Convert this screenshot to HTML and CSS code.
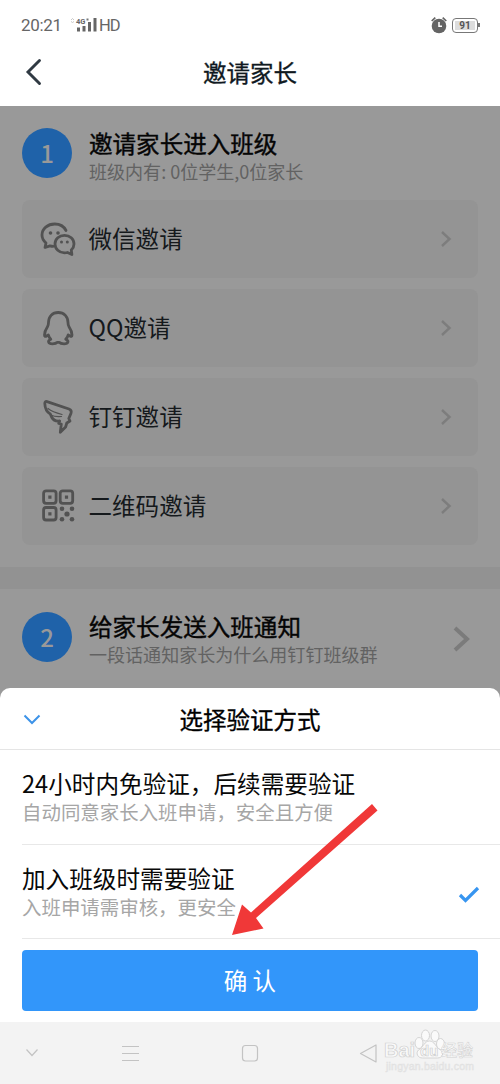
FILE: index.html
```html
<!DOCTYPE html>
<html lang="zh-CN">
<head>
<meta charset="utf-8">
<title>邀请家长</title>
<link rel="stylesheet" href="styles.css">
</head>
<body>
<div class="phone">
  <div class="status">
    <span class="time">20:21</span>
    <svg class="signal" width="28" height="16" viewBox="0 0 28 16">
      <path d="M1 3l1.500-1.500L4 3M1 4.500l1.500 1 1.500-1" fill="none" stroke="#bbb" stroke-width=".8"/>
      <text x="6" y="7" class="net">4G</text>
      <path d="M7 10.500h3v4H7zM12.500 9h3v5.500h-3zM18 5h3v9.500h-3zM23.500 1h3v13.500h-3z" fill="#666"/>
      <path d="M16.500 1.500h2v2h-2z" fill="#777"/>
    </svg>
    <span class="hd">HD</span>
    <svg class="alarm" width="18" height="18" viewBox="0 0 18 18">
      <circle cx="9" cy="10" r="7.300" fill="#646464"/>
      <path d="M1.700 5L5.300 1.600M16.300 5l-3.600-3.400" stroke="#646464" stroke-width="1.700"/>
      <path d="M9 6v4.300h3" stroke="#fff" stroke-width="1.500" fill="none"/>
    </svg>
    <span class="battery"><span class="charge">91</span></span>
  </div>
  <header class="header">
    <svg class="back" width="18" height="28" viewBox="0 0 18 28"><path d="M15.500 2.500L4 14l11.500 11.500" fill="none" stroke="#303a43" stroke-width="2.900" stroke-linecap="round"/></svg>
    <h1>邀请家长</h1>
  </header>
  <main class="content">
    <section class="step step-one">
      <span class="badge">1</span>
      <div class="copy"><h2>邀请家长进入班级</h2><p>班级内有: 0位学生,0位家长</p></div>
    </section>
    <div class="list">
      <div class="card">
        <svg class="icon" viewBox="0 0 36 36" width="36" height="36">
          <path d="M26 9.500C23.800 5.200 19.800 3 14.800 3 7.700 3 2 7.700 2 14c0 3.500 1.700 6 4 8l-1 4.500 5-1.700c1 .3 2 .5 3.200.5" />
          <path d="M24.500 14.300c5.300 0 9.500 3.800 9.500 8.700 0 2.600-1.200 4.600-2.700 6.100l.6 4.400-4.400-2c-1 .3-2 .4-3 .4-5.300 0-9.500-3.900-9.500-8.900s4.200-8.700 9.500-8.700z"/>
          <g class="solid"><circle cx="10.500" cy="12" r="1.800"/><circle cx="18" cy="12" r="1.800"/><circle cx="21.500" cy="21" r="1.500"/><circle cx="27.300" cy="21" r="1.500"/></g>
        </svg>
        <span class="label">微信邀请</span>
        <svg class="arrow" width="12" height="18" viewBox="0 0 12 18"><path d="M2 2l7.500 7L2 16"/></svg>
      </div>
      <div class="card">
        <svg class="icon" viewBox="0 0 36 36" width="36" height="36">
          <path d="M18.200 2.500C12.500 2.500 8.700 6.400 8.500 12.500c0 1.700-.2 3-1 4.200C5.600 19.500 4.500 22 4.500 25c0 1.500 1 1.800 2 .9l1.800-1c.4 1.700 1.200 3 2.500 4.300-3.600 1.700-2.700 4.600 1.600 4.600 2.500 0 4-.4 5-1.500h1.700c1 1.100 2.500 1.500 5 1.500 4.300 0 5.200-2.900 1.600-4.600 1.300-1.300 2.100-2.600 2.500-4.300l1.800 1c1 .9 2 .6 2-.9 0-3-1.100-5.500-3-8.300-.8-1.200-1-2.500-1-4.200-.2-6.100-4.100-10-9.800-10z"/>
        </svg>
        <span class="label">QQ邀请</span>
        <svg class="arrow" width="12" height="18" viewBox="0 0 12 18"><path d="M2 2l7.500 7L2 16"/></svg>
      </div>
      <div class="card">
        <svg class="icon" viewBox="0 0 36 36" width="36" height="36">
          <path d="M7 2.600l22 7.400c2.200.8 2.700 2 2 4.200l-2.200 5.300 1.200 2.500-3.200 2-1.200 4-5.300 5.200 1-8.200-2.600-.5 1-2.500c-3.400.5-6.500-1-8-3.700l-1.400-3.300C7 13.300 5 9.500 4.800 4.500c0-1.600.8-2.300 2.200-1.900z"/>
          <path class="fine" d="M8 9.500c3 2.500 8 4.500 14 6M10.500 16c3 1.300 6 2 11 1.500"/>
        </svg>
        <span class="label">钉钉邀请</span>
        <svg class="arrow" width="12" height="18" viewBox="0 0 12 18"><path d="M2 2l7.500 7L2 16"/></svg>
      </div>
      <div class="card">
        <svg class="icon" viewBox="0 0 36 36" width="36" height="36">
          <rect x="3.600" y="2.800" width="12.500" height="12.500" rx="2.500"/><rect x="20.200" y="2.800" width="12.500" height="12.500" rx="2.500"/><rect x="3.600" y="19.500" width="12.500" height="12.500" rx="2.500"/>
          <g class="solid"><path d="M8.300 7.500h3.200v3.200H8.300zM24.900 7.500h3.200v3.200h-3.200zM8.300 24.200h3.200v3.200H8.300z"/><circle cx="22" cy="20.700" r="2.300"/><circle cx="32" cy="20.700" r="2.300"/><circle cx="27" cy="26" r="2.600"/><circle cx="22" cy="31.300" r="2.300"/><circle cx="32" cy="31.300" r="2.300"/></g>
        </svg>
        <span class="label">二维码邀请</span>
        <svg class="arrow" width="12" height="18" viewBox="0 0 12 18"><path d="M2 2l7.500 7L2 16"/></svg>
      </div>
    </div>
    <div class="divider"></div>
    <section class="step step-two">
      <span class="badge">2</span>
      <div class="copy"><h2>给家长发送入班通知</h2><p>一段话通知家长为什么用钉钉班级群</p></div>
      <svg class="big-arrow" width="18" height="28" viewBox="0 0 18 28"><path d="M2 3l12 11L2 25"/></svg>
    </section>
  </main>
  <section class="sheet">
    <div class="sheet-head">
      <svg class="close" width="20" height="12" viewBox="0 0 20 12"><path d="M2.500 2.500L10 10l7.500-7.500" fill="none" stroke="#3d93e8" stroke-width="2"/></svg>
      <h2>选择验证方式</h2>
    </div>
    <div class="option"><div><h3>24小时内免验证，后续需要验证</h3><p>自动同意家长入班申请，安全且方便</p></div></div>
    <div class="option chosen"><div><h3>加入班级时需要验证</h3><p>入班申请需审核，更安全</p></div>
      <svg width="22" height="18" viewBox="0 0 22 18"><path d="M2 9l5.500 5.500L20 2" fill="none" stroke="#3795f0" stroke-width="3.200"/></svg>
    </div>
    <div class="action"><button class="confirm">确 认</button></div>
    <svg class="pointer" width="150" height="136" viewBox="0 0 150 136"><path d="M142 3l5.500 6.500L26 117l7.500 10.500L2 134l10-30.500 9 8z" fill="#f03838"/></svg>
  </section>
  <nav class="nav">
    <svg width="420" height="34" viewBox="0 0 420 34" fill="none" stroke="#c3c3c3" stroke-width="1.200">
      <path d="M6.500 13.500l5.500 6 5.500-6M102 10.500h17M102 17.500h17M102 24.500h17"/>
      <rect x="222.500" y="9.500" width="15" height="15.500" rx="3"/>
      <path d="M356 9v17l-15.500-8.500z" stroke-linejoin="round"/>
    </svg>
    <svg class="watermark" width="102" height="44" viewBox="0 0 102 44">
      <g class="paw"><ellipse cx="37" cy="14" rx="4" ry="5.500"/><ellipse cx="43.500" cy="6.500" rx="4" ry="5.500"/><ellipse cx="53" cy="7" rx="4" ry="5.500"/><ellipse cx="58.500" cy="15" rx="4" ry="5.500"/><path d="M47.500 12c-5 0-6 6-11 9-3 3-1 8 4 8h15c5 0 7-5 3-8-5-3-6-9-11-9z"/></g>
      <text x="2" y="28" class="brand">Bai</text><text x="38" y="27" class="du">du</text><text x="59" y="27" class="cn">经验</text>
      <text x="4" y="41" class="site" textLength="88">jingyan.baidu.com</text>
    </svg>
  </nav>
</div>
</body>
</html>
```
FILE: styles.css
```css
* { box-sizing: border-box; }
body { margin: 0; font-family: "Noto Sans CJK SC", sans-serif; background: #fff; }
h1, h2, h3, p { margin: 0; font-weight: 400; white-space: nowrap; }
svg { display: block; flex: none; }
.phone { width: 500px; height: 1084px; overflow: hidden; display: flex; flex-direction: column; }

.status { height: 50px; padding: 0 20px 0 21px; display: flex; align-items: center; font-family: Roboto, sans-serif; color: #666; font-size: 17px; }
.signal { margin-left: 7px; }
.net { font: bold 7.500px Roboto, sans-serif; fill: #666; }
.hd { margin-left: 1px; font-size: 16.500px; letter-spacing: -1px; }
.time { width: 42px; letter-spacing: -.3px; }
.alarm { margin-left: auto; margin-right: 4px; }
.battery { width: 26px; height: 15px; margin-right: 2px; padding: 2px; border: 1.500px solid #777; border-radius: 4px; display: flex; position: relative; }
.battery::after { content: ""; position: absolute; right: -3px; top: 4px; width: 2px; height: 4px; background: #777; }
.charge { flex: 1; background: #ddd; font: bold 10px/9px Roboto, sans-serif; text-align: center; color: #555; }

.header { height: 56px; padding: 0 24px 12px; display: grid; grid-template-columns: 18px 1fr 18px; align-items: center; }
.header h1 { text-align: center; font-size: 23.500px; line-height: 30px; color: #10191f; -webkit-text-stroke: .35px; }

.content { height: 582px; flex: none; background: #999; }
.step { display: flex; padding: 0 28px 0 22px; }
.step-one { height: 94px; padding-top: 22px; }
.step-two { height: 93px; padding-top: 23px; }
.badge { width: 50px; height: 50px; border-radius: 50%; background: #1f62a9; color: #999; font: 500 24px/50px "Noto Sans CJK SC", sans-serif; text-align: center; }
.copy { margin-left: 17px; }
.copy h2 { font-size: 23.550px; line-height: 30px; color: #050505; -webkit-text-stroke: .4px; }
.copy p { font-size: 18.050px; line-height: 26px; color: #626262; }
.step-two .copy { margin-top: -1px; }
.list { padding: 0 22px; display: grid; gap: 11px; }
.card { height: 78px; border-radius: 8px; background: #949494; display: flex; align-items: center; padding: 0 26px 0 18px; }
.icon { fill: none; stroke: #525252; stroke-width: 2.800; stroke-linejoin: round; stroke-linecap: round; }
.icon .solid { fill: #525252; stroke: none; }
.icon .fine { stroke-width: 1.200; }
.label { flex: 1; margin-left: 12.500px; padding-bottom: 2px; font-size: 23.550px; line-height: 34px; color: #15191c; }
.arrow, .big-arrow { fill: none; stroke: #7d7d7d; stroke-width: 2.400; }
.big-arrow { stroke: #7b7b7b; stroke-width: 4; margin: 13px 1px 0 auto; }
.divider { height: 22px; margin-top: 22px; background: #929292; }

.sheet { height: 334px; flex: none; background: #fff; border-radius: 10px 10px 0 0; position: relative; box-shadow: 0 -10px 0 10px #999; clip-path: inset(-10px 0 0); }
.sheet-head { height: 62px; padding: 0 22px; display: grid; grid-template-columns: 20px 1fr 20px; align-items: center; border-bottom: 1px solid #e5e5e5; }
.sheet-head h2 { text-align: center; font-size: 23.500px; line-height: 30px; -webkit-text-stroke: .35px; }
.option { height: 95px; margin-left: 22px; padding: 18px 20px 0 0; display: flex; justify-content: space-between; border-bottom: 1px solid #e8e8e8; }
.option h3 { font-size: 23.620px; line-height: 30px; color: #080808; }
.option p { font-size: 19.450px; line-height: 27px; color: #a6a6a6; }
.chosen { height: 94px; }
.option svg { margin-top: 23px; }
.action { padding: 11px 22px; }
.confirm { display: block; width: 456px; height: 61px; padding: 0; border: 0; border-radius: 4px; background: #3296fa; color: #fff; font: 23.500px/61px "Noto Sans CJK SC", sans-serif; }
.pointer { position: absolute; left: 230px; top: 113px; }

.nav { height: 62px; flex: none; padding: 14px 20px 0; background: #f3f3f3; position: relative; }
.watermark { position: absolute; left: 382px; top: 7px; }
.paw { fill: #fafafa; stroke: #d4d4d4; stroke-width: 1; }
.brand, .du, .cn { font: bold 20px "Liberation Sans", sans-serif; fill: #fafafa; stroke: #d0d0d0; stroke-width: .7; }
.du { font-size: 15px; }
.cn { font: 500 16px "Noto Sans CJK SC", sans-serif; stroke-width: .5; }
.site { font: 10.500px "Liberation Sans", sans-serif; fill: #e9e9e9; stroke: #e0e0e0; stroke-width: .4; }
```
